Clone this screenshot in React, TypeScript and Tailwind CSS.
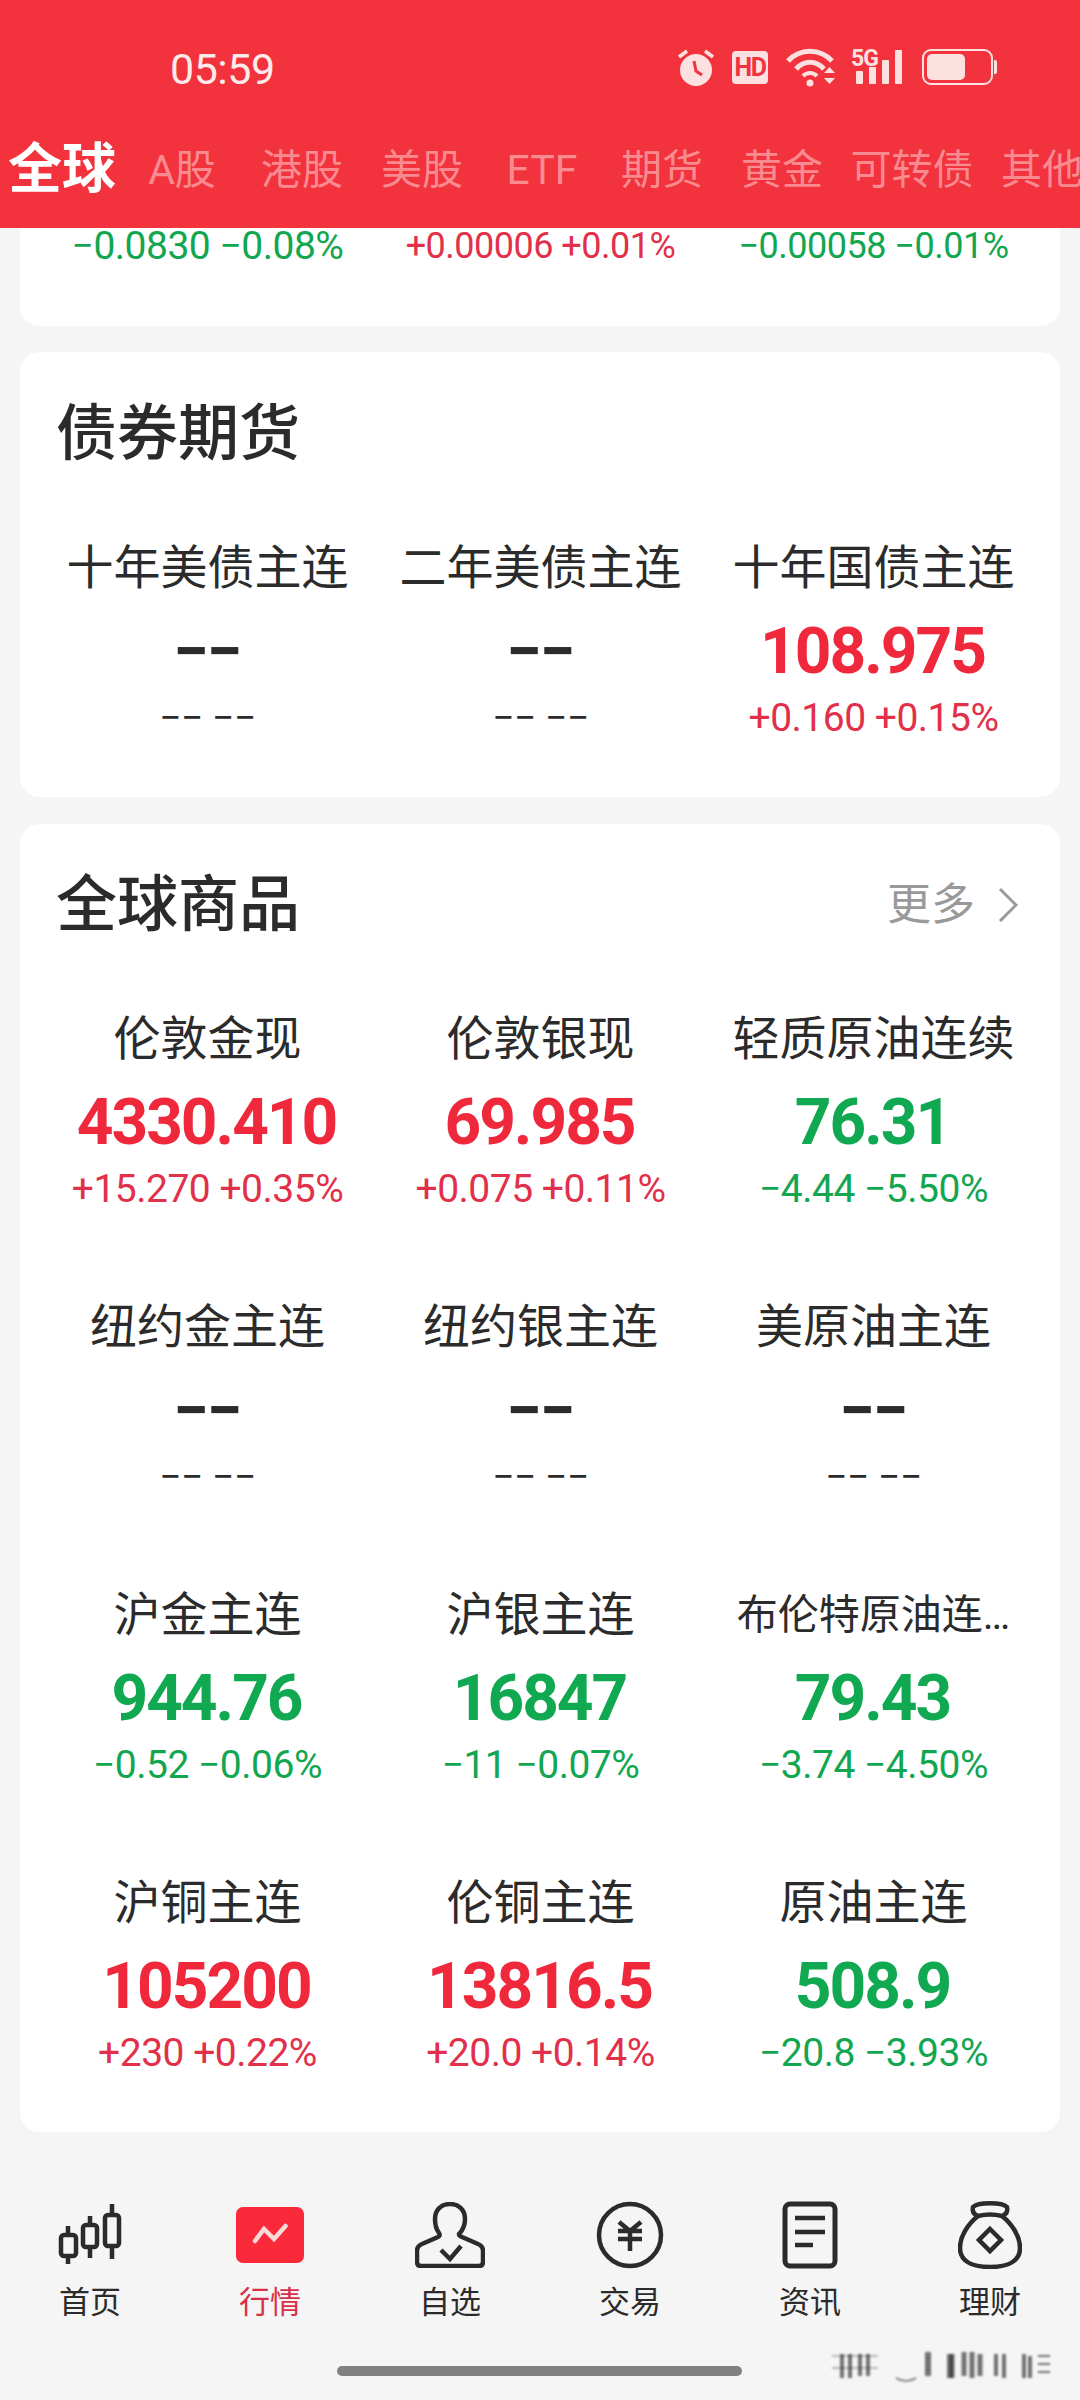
const tabs = [
  { label: "A股", width: "w-[120px]" },
  { label: "港股", width: "w-[120px]" },
  { label: "美股", width: "w-[120px]" },
  { label: "ETF", width: "w-[120px]" },
  { label: "期货", width: "w-[120px]" },
  { label: "黄金", width: "w-[120px]" },
  { label: "可转债", width: "w-[140px]" },
  { label: "其他", width: "w-[120px]" },
];

type Quote = { name: string; value: string; change: string; tone: "up" | "down" | "none"; small?: boolean };

const bonds: Quote[] = [
  { name: "十年美债主连", value: "−−", change: "−− −−", tone: "none" },
  { name: "二年美债主连", value: "−−", change: "−− −−", tone: "none" },
  { name: "十年国债主连", value: "108.975", change: "+0.160 +0.15%", tone: "up" },
];

const goods: Quote[] = [
  { name: "伦敦金现", value: "4330.410", change: "+15.270 +0.35%", tone: "up" },
  { name: "伦敦银现", value: "69.985", change: "+0.075 +0.11%", tone: "up" },
  { name: "轻质原油连续", value: "76.31", change: "−4.44 −5.50%", tone: "down" },
  { name: "纽约金主连", value: "−−", change: "−− −−", tone: "none" },
  { name: "纽约银主连", value: "−−", change: "−− −−", tone: "none" },
  { name: "美原油主连", value: "−−", change: "−− −−", tone: "none" },
  { name: "沪金主连", value: "944.76", change: "−0.52 −0.06%", tone: "down" },
  { name: "沪银主连", value: "16847", change: "−11 −0.07%", tone: "down" },
  { name: "布伦特原油连…", value: "79.43", change: "−3.74 −4.50%", tone: "down", small: true },
  { name: "沪铜主连", value: "105200", change: "+230 +0.22%", tone: "up" },
  { name: "伦铜主连", value: "13816.5", change: "+20.0 +0.14%", tone: "up" },
  { name: "原油主连", value: "508.9", change: "−20.8 −3.93%", tone: "down" },
];

const valueTone = { up: "text-[#f0283c]", down: "text-[#10a850]", none: "text-[#2b2b2b]" };
const changeTone = { up: "text-[#e2304a]", down: "text-[#12a650]", none: "text-[#2b2b2b]" };

function QuoteCell({ quote, height }: { quote: Quote; height: string }) {
  return (
    <div className={`flex flex-col items-center ${height}`}>
      <div className={`h-[60px] whitespace-nowrap leading-[60px] text-[#2b2b2b] ${quote.small ? "text-[41px]" : "text-[47px]"}`}>
        {quote.name}
      </div>
      <div className={`mt-[18px] h-[72px] pr-[2px] text-[64px] font-bold leading-[72px] tracking-[-2px] ${valueTone[quote.tone]}`}>
        {quote.value}
      </div>
      <div className={`h-[60px] whitespace-nowrap text-[39px] leading-[60px] tracking-[-0.5px] ${changeTone[quote.tone]}`}>
        {quote.change}
      </div>
    </div>
  );
}

function StatusIcons() {
  return (
    <div className="flex items-center text-[#fde0e0]">
      {/* alarm */}
      <svg width="38" height="40" viewBox="0 0 38 40">
        <circle cx="19" cy="23" r="16" fill="#fde0e0" />
        <path d="M2 10 10 4M36 10 28 4" stroke="#fde0e0" strokeWidth="3.5" fill="none" />
        <path d="M17 14 19 24 25 28" stroke="#f2323c" strokeWidth="3" fill="none" />
      </svg>
      <div className="ml-[17px] flex h-[33px] w-[36px] items-center justify-center rounded-[4px] bg-[#fde0e0] text-[25px] font-bold leading-none tracking-[-1.5px] text-[#f2323c]">
        HD
      </div>
      {/* wifi */}
      <svg width="52" height="40" viewBox="0 0 52 40" className="ml-[18px]">
        <path d="M2 14C14 1 34 1 46 14" stroke="#fde0e0" strokeWidth="5" fill="none" />
        <path d="M10 22C18 13 30 13 38 22" stroke="#fde0e0" strokeWidth="5" fill="none" />
        <path d="M17 29C21 25 27 25 31 29" stroke="#fde0e0" strokeWidth="4" fill="none" />
        <circle cx="24" cy="36" r="3.5" fill="#fde0e0" />
        <path d="M38 26 43.500 20 49 26ZM38 31 49 31 43.500 37Z" fill="#fde0e0" />
      </svg>
      <div className="relative ml-[13px] flex h-[34px] w-[54px] items-end gap-[6px] pl-[5px]">
        <span className="absolute left-0 top-[-3px] text-[23px] font-bold leading-none tracking-[-1px]">5G</span>
        <span className="h-[13px] w-[7px] rounded-[1px] bg-[#fde0e0]" />
        <span className="h-[17px] w-[7px] rounded-[1px] bg-[#fde0e0]" />
        <span className="h-[24px] w-[7px] rounded-[1px] bg-[#fde0e0]" />
        <span className="h-[34px] w-[7px] rounded-[1px] bg-[#fde0e0]" />
      </div>
      <div className="ml-[17px] flex items-center gap-[1px]">
        <div className="h-[36px] w-[71px] rounded-[9px] border-[2.500px] border-[#fde0e0] p-[3px]">
          <div className="h-full w-[38px] rounded-[5px] bg-[#fde0e0]" />
        </div>
        <div className="h-[14px] w-[3px] rounded-r-[2px] bg-[#fde0e0]" />
      </div>
    </div>
  );
}

function Header() {
  return (
    <header className="h-[228px] bg-[#f2323c]">
      <div className="flex h-[140px] items-start justify-between pl-[170px] pr-[83px] pt-[47px]">
        <div className="text-[43px] leading-[44px] tracking-[-0.5px] text-[#fdeaea]">05:59</div>
        <StatusIcons />
      </div>
      <nav className="flex h-[60px] items-center overflow-hidden whitespace-nowrap pl-[2px]">
        <div className="w-[120px] shrink-0 text-center text-[54px] font-bold leading-[60px] text-white">全球</div>
        {tabs.map((tab) => (
          <div key={tab.label} className={`${tab.width} shrink-0 text-center text-[41px] leading-[60px] text-[#f98b90]`}>
            {tab.label}
          </div>
        ))}
      </nav>
    </header>
  );
}

function TabIcon({ name }: { name: string }) {
  const dark = { fill: "none", stroke: "#2b2b2b", strokeWidth: 4.5 };
  if (name === "首页")
    return (
      <svg width="64" height="62" viewBox="0 0 64 62" {...dark}>
        <path d="M10 22V60M32 12V54M54 0V55" />
        <rect x="3" y="31" width="15" height="21" rx="3" fill="#f5f5f5" />
        <rect x="25" y="21" width="14" height="22" rx="3" fill="#f5f5f5" />
        <rect x="47" y="11" width="14" height="31" rx="3" fill="#f5f5f5" />
      </svg>
    );
  if (name === "行情")
    return (
      <svg width="68" height="56" viewBox="0 0 68 56" className="my-[3px]">
        <rect width="68" height="56" rx="7" fill="#fb2a3a" />
        <path d="M19 34 28 22 38 32 49.500 19" stroke="#f9d8d8" strokeWidth="4.500" fill="none" strokeLinecap="round" />
      </svg>
    );
  if (name === "自选")
    return (
      <svg width="70" height="66" viewBox="0 0 70 66" {...dark}>
        <path d="M24 31C21 27 20 22 20 17C20 8 26 2 35 2C44 2 50 8 50 17C50 22 49 27 44 32C44 34 45 34 47 35L63 42Q68 44 68 49V60Q68 64 64 64H6Q2 64 2 60V49Q2 44 7 42L23 35C25 34 25 33 24 31Z" />
        <path d="M26 48 35 57 46 44" />
      </svg>
    );
  if (name === "交易")
    return (
      <svg width="68" height="68" viewBox="0 0 68 68" {...dark}>
        <circle cx="34" cy="34" r="31" />
        <path d="M23 21 34 30 45 21M22 30H46M22 38H46M34 30V50" />
      </svg>
    );
  if (name === "资讯")
    return (
      <svg width="56" height="68" viewBox="0 0 56 68" {...dark}>
        <rect x="3" y="3" width="50" height="62" rx="5" strokeWidth="5" />
        <path d="M13 17H43M13 31H43M13 44H31" />
      </svg>
    );
  return (
    <svg width="64" height="68" viewBox="0 0 64 68" {...dark}>
      <path d="M20 15C15 13 14 10 15 6C20 1 44 1 49 6C50 10 49 13 44 15Q32 12 20 15Z" />
      <path d="M20 15C10 23 2 35 2 47C2 60 14 66 32 66C50 66 62 60 62 47C62 35 54 23 44 15" />
      <path d="M32 28 43 39 32 50 21 39Z" />
    </svg>
  );
}

const navItems = ["首页", "行情", "自选", "交易", "资讯", "理财"];

function BottomNav() {
  return (
    <nav className="grid h-[268px] grid-cols-6 bg-[#f5f5f5] pt-[68px]">
      {navItems.map((item) => (
        <div key={item} className="flex flex-col items-center">
          <div className="flex h-[70px] items-center">
            <TabIcon name={item} />
          </div>
          <div className={`mt-[13px] text-[31px] leading-[40px] ${item === "行情" ? "text-[#d9304a]" : "text-[#2b2b2b]"}`}>
            {item}
          </div>
        </div>
      ))}
    </nav>
  );
}

export default function App() {
  return (
    <div className="relative h-[2400px] w-[1080px] overflow-hidden bg-[#f5f5f5] font-['Roboto','Noto_Sans_CJK_SC',sans-serif]">
      <Header />
      <main className="flex flex-col px-[20px]">
        <section className="grid h-[98px] grid-cols-3 rounded-b-[20px] bg-white pl-[21px] pr-[20px]">
          <div className="text-center text-[39px] leading-[36px] tracking-[-0.5px] text-[#12a650]">−0.0830 −0.08%</div>
          <div className="text-center text-[36px] leading-[36px] tracking-[-0.5px] text-[#e2304a]">+0.00006 +0.01%</div>
          <div className="text-center text-[36px] leading-[36px] tracking-[-0.5px] text-[#12a650]">−0.00058 −0.01%</div>
        </section>

        <section className="mt-[26px] h-[445px] rounded-[20px] bg-white pl-[21px] pr-[20px]">
          <h2 className="pl-[15px] pt-[47px] text-[61px] font-medium leading-[70px] text-[#2b2b2b]">债券期货</h2>
          <div className="mt-[69px] grid grid-cols-3">
            {bonds.map((q) => (
              <QuoteCell key={q.name} quote={q} height="h-[210px]" />
            ))}
          </div>
        </section>

        <section className="mt-[27px] h-[1308px] rounded-[20px] bg-white pl-[21px] pr-[20px]">
          <div className="flex items-center justify-between pl-[15px] pr-[21px] pt-[46px]">
            <h2 className="text-[61px] font-medium leading-[70px] text-[#2b2b2b]">全球商品</h2>
            <div className="flex items-center text-[44px] leading-[70px] text-[#999999]">
              更多
              <svg width="22" height="36" viewBox="0 0 22 36" className="ml-[22px]" fill="none" stroke="#999999" strokeWidth="3">
                <path d="M3 2 19 18 3 34" />
              </svg>
            </div>
          </div>
          <div className="mt-[69px] grid grid-cols-3">
            {goods.map((q) => (
              <QuoteCell key={q.name} quote={q} height="h-[288px]" />
            ))}
          </div>
        </section>
      </main>
      <div className="absolute inset-x-0 bottom-0">
        <BottomNav />
      </div>
      <div className="absolute bottom-[24px] left-[337px] h-[10px] w-[405px] rounded-full bg-[#808080]" />
      {/* watermark smear */}
      <svg width="224" height="36" viewBox="0 0 224 36" className="absolute left-[828px] top-[2348px] blur-[1px]">
        <g stroke="#2b2b2b" strokeOpacity="0.65" fill="none">
          <path d="M4 8H50M4 20H50" strokeOpacity="0.3" strokeWidth="2" />
          <path d="M14 6V30M22 6V30M32 6V28M40 6V28" strokeWidth="4" />
          <path d="M68 30Q78 36 88 30" strokeWidth="1.500" />
          <path d="M100 4V28M122 6V30" strokeWidth="6" />
          <path d="M124 6V30M136 4V28M144 4V30M152 6V28" strokeWidth="5" />
          <path d="M168 6V28M176 6V30M196 6V30M202 8V30" strokeWidth="4" />
          <path d="M210 8H222M210 16H222M210 24H222" strokeWidth="2" />
        </g>
      </svg>
    </div>
  );
}
